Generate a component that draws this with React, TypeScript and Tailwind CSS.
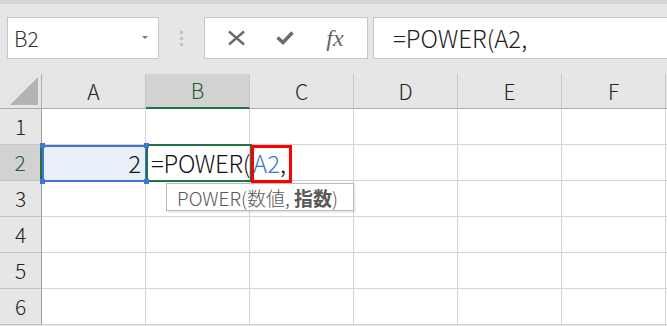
import React from "react";

const FONT = { fontFamily: '"Noto Sans CJK JP", "Noto Sans", sans-serif' };

export default function App() {
  const cols = ["A", "B", "C", "D", "E", "F"];
  const rows = [1, 2, 3, 4, 5, 6];
  return (
    <div className="relative w-[667px] h-[326px] overflow-hidden bg-[#e6e6e6] font-light" style={FONT}>
      <div className="h-[4px] bg-[#d5d5d5]" />
      {/* toolbar */}
      <div className="h-[70px] flex items-start pt-[13px] pl-[7px]">
        <div className="w-[152px] h-[42px] bg-white border border-[#c6c6c6] flex items-center pl-[6px] pr-[10px]">
          <span className="text-[21px] leading-none text-[#333] flex-1">B2</span>
          <svg width="6" height="4" viewBox="0 0 6 4">
            <path d="M0 0 L6 0 L3 3 Z" fill="#777" />
          </svg>
        </div>
        <div className="w-[45px] h-[42px] flex flex-col items-center justify-center gap-[3px]">
          <div className="w-[3px] h-[3px] bg-[#c2c2c2]" />
          <div className="w-[3px] h-[3px] bg-[#c2c2c2]" />
          <div className="w-[3px] h-[3px] bg-[#c2c2c2]" />
        </div>
        <div className="w-[164px] h-[42px] bg-white border border-[#c6c6c6] flex items-center">
          <div className="w-[60px] flex justify-center pl-[2px]">
            <svg width="19" height="16" viewBox="0 0 19 16">
              <path d="M2 1.5 L17 14.5 M17 1.5 L2 14.5" stroke="#6b6b6b" strokeWidth="2.4" fill="none" />
            </svg>
          </div>
          <div className="w-[40px] flex justify-center">
            <svg width="18" height="14" viewBox="0 0 18 14">
              <path d="M1.5 6.5 L7 11.5 L16.5 1.5" stroke="#6b6b6b" strokeWidth="3.4" fill="none" />
            </svg>
          </div>
          <div className="flex-1 flex justify-center pr-[2px]">
            <span
              className="text-[24px] leading-none italic font-normal text-[#666]"
              style={{ fontFamily: '"Liberation Serif", "DejaVu Serif", serif' }}
            >
              fx
            </span>
          </div>
        </div>
        <div className="ml-[5px] flex-1 h-[42px] bg-white border border-r-0 border-[#c6c6c6] flex items-center pl-[19px]">
          <span className="text-[24px] leading-none text-[#222]">=POWER(A2,</span>
        </div>
      </div>
      {/* grid */}
      <div className="grid grid-cols-[42px_repeat(6,104px)_1fr] grid-rows-[35px_repeat(6,36px)] bg-white">
        <div className="bg-[#e6e6e6] border-r border-b border-[#ababab] flex items-end justify-end pr-[3px] pb-[3px]">
          <svg width="28" height="28" viewBox="0 0 28 28">
            <path d="M0 28 L28 28 L28 0 Z" fill="#b4b4b4" />
          </svg>
        </div>
        {cols.map((c) =>
          c === "B" ? (
            <div
              key={c}
              className="bg-[#d2d2d2] border-r border-[#c6c6c6] border-b-2 border-b-[#217346] flex items-center justify-center text-[21px] leading-none text-[#1d5e38]"
            >
              {c}
            </div>
          ) : (
            <div
              key={c}
              className="bg-[#e6e6e6] border-r border-[#c6c6c6] border-b border-b-[#ababab] flex items-center justify-center text-[21px] leading-none text-[#222]"
            >
              {c}
            </div>
          )
        )}
        <div className="bg-[#e6e6e6] border-b border-b-[#ababab]" />
        {rows.map((r) => (
          <React.Fragment key={r}>
            {r === 2 ? (
              <div className="bg-[#d2d2d2] border-r-2 border-r-[#217346] border-b border-[#c6c6c6] flex items-center justify-center text-[21px] leading-none text-[#1d5e38]">
                {r}
              </div>
            ) : (
              <div className="bg-[#e6e6e6] border-r border-r-[#9e9e9e] border-b border-b-[#c6c6c6] flex items-center justify-center text-[21px] leading-none text-[#222]">
                {r}
              </div>
            )}
            {cols.map((c) => {
              if (r === 2 && c === "A")
                return (
                  <div
                    key={c}
                    className="bg-[#e8eff9] border-r border-b border-[#d4d4d4] flex items-center justify-end pr-[4px] text-[24px] leading-none text-[#111]"
                  >
                    2
                  </div>
                );
              if (r === 2 && c === "B")
                return (
                  <div key={c} className="relative border-r border-b border-[#d4d4d4] flex items-center pl-[5px]">
                    <span className="whitespace-nowrap text-[24px] leading-none text-[#111] tracking-[-0.3px]">
                      =POWER(<span className="text-[#3b78d0] tracking-normal ml-[3px]">A2</span>,
                    </span>
                  </div>
                );
              return <div key={c} className="border-r border-b border-[#d4d4d4]" />;
            })}
            <div className="border-b border-[#d4d4d4]" />
          </React.Fragment>
        ))}
      </div>

      {/* A2 reference highlight */}
      <div className="absolute left-[42px] top-[145px] w-[105px] h-[37px] border-2 border-[#3f77d0] pointer-events-none" />
      <div className="absolute left-[40px] top-[143px] w-[5px] h-[5px] bg-[#3f77d0]" />
      <div className="absolute left-[40px] top-[179px] w-[5px] h-[5px] bg-[#3f77d0]" />
      {/* B2 active cell */}
      <div className="absolute left-[146px] top-[144px] w-[106px] h-[38px] border-2 border-[#217346]" />
      <div className="absolute left-[144px] top-[143px] w-[5px] h-[5px] bg-[#3f77d0]" />
      <div className="absolute left-[144px] top-[179px] w-[5px] h-[5px] bg-[#3f77d0]" />
      {/* red emphasis box */}
      <div className="absolute left-[251px] top-[145px] w-[41px] h-[38px] border-[3px] border-[#ff0000]" />
      {/* tooltip */}
      <div className="absolute left-[166px] top-[183px] w-[188px] h-[28px] bg-white border border-[#bcbcbc] shadow-[1px_1px_2px_rgba(0,0,0,0.15)] flex items-center pl-[10px]">
        <span className="whitespace-nowrap text-[19px] leading-none text-[#595959]">
          POWER(数値, <span className="font-bold">指数</span>)
        </span>
      </div>
    </div>
  );
}
